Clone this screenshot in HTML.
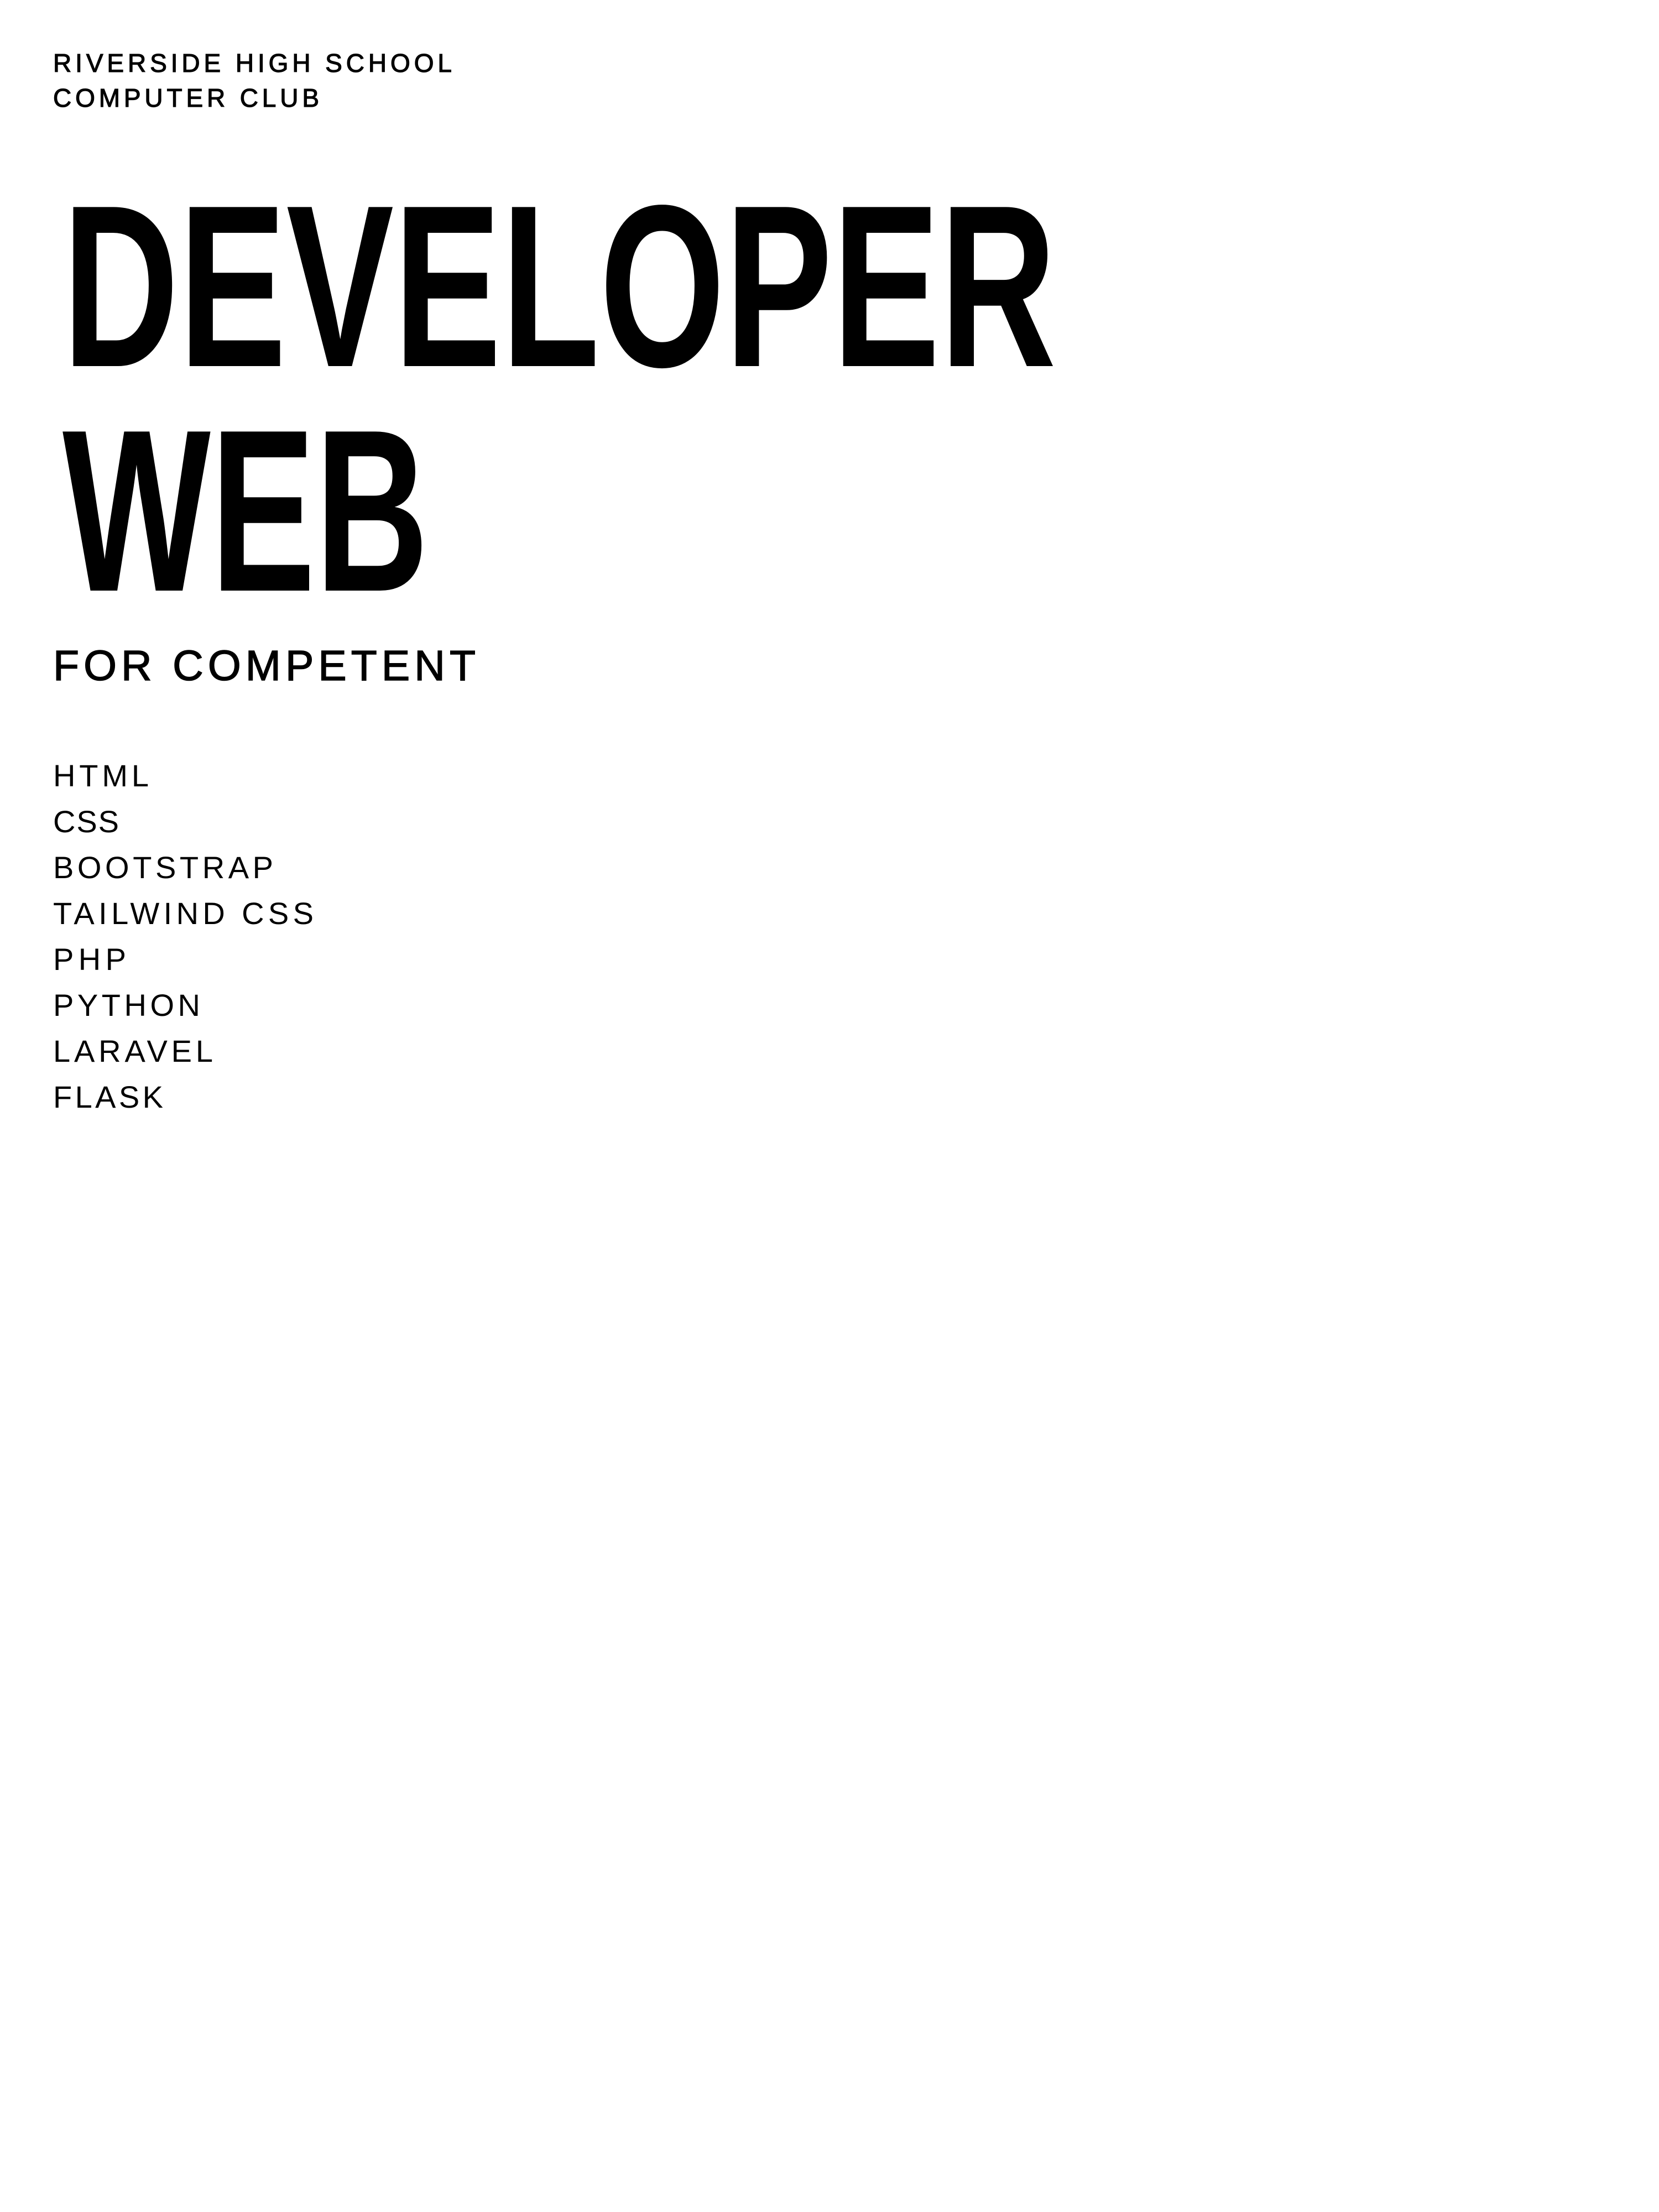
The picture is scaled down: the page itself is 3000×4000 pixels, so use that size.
<!DOCTYPE html>
<html><head><meta charset="utf-8"><style>
html,body{margin:0;padding:0;background:#fff;width:3000px;height:4000px;overflow:hidden}
svg{display:block}
text{font-family:"Liberation Sans",sans-serif;fill:#000}
</style></head><body>
<svg width="3000" height="4000" viewBox="0 0 3000 4000" xmlns="http://www.w3.org/2000/svg">
<rect width="3000" height="4000" fill="#fff"/>
<g font-size="46" stroke="#000" stroke-width="1.2">
<text x="96" y="130" textLength="721" lengthAdjust="spacing">RIVERSIDE HIGH SCHOOL</text>
<text x="96" y="193" textLength="481" lengthAdjust="spacing">COMPUTER CLUB</text>
</g>
<g font-size="418" font-weight="bold">
<text x="113" y="662" textLength="1797" lengthAdjust="spacingAndGlyphs">DEVELOPER</text>
<text x="113" y="1068" textLength="662" lengthAdjust="spacingAndGlyphs">WEB</text>
</g>
<text x="96" y="1230" font-size="77" textLength="764" lengthAdjust="spacing" stroke="#000" stroke-width="1.5">FOR COMPETENT</text>
<g font-size="56">
<text x="96" y="1422" textLength="173" lengthAdjust="spacing">HTML</text>
<text x="96" y="1505" textLength="119" lengthAdjust="spacing">CSS</text>
<text x="96" y="1588" textLength="398" lengthAdjust="spacing">BOOTSTRAP</text>
<text x="96" y="1671" textLength="471" lengthAdjust="spacing">TAILWIND CSS</text>
<text x="96" y="1754" textLength="132" lengthAdjust="spacing">PHP</text>
<text x="96" y="1837" textLength="266" lengthAdjust="spacing">PYTHON</text>
<text x="96" y="1920" textLength="289" lengthAdjust="spacing">LARAVEL</text>
<text x="96" y="2003" textLength="199" lengthAdjust="spacing">FLASK</text>
</g>
</svg>
</body></html>
